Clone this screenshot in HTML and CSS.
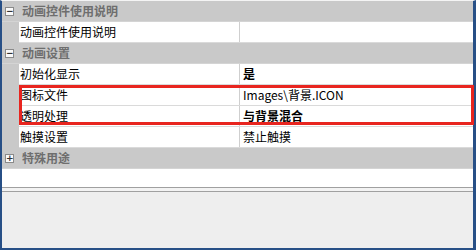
FILE: index.html
```html
<!DOCTYPE html>
<html>
<head>
<meta charset="utf-8">
<link rel="stylesheet" href="styles.css">
</head>
<body>
<div class="frame">
  <div class="grid">
    <div class="row cat">
      <span class="toggle">−</span><span class="cat-label">动画控件使用说明</span>
    </div>
    <div class="row prop">
      <span class="gutter"></span><span class="name">动画控件使用说明</span><span class="value"></span>
    </div>
    <div class="row cat">
      <span class="toggle">−</span><span class="cat-label">动画设置</span>
    </div>
    <div class="row prop">
      <span class="gutter"></span><span class="name">初始化显示</span><span class="value bold">是</span>
    </div>
    <div class="row prop">
      <span class="gutter"></span><span class="name">图标文件</span><span class="value">Images\背景.ICON</span>
    </div>
    <div class="row prop">
      <span class="gutter"></span><span class="name">透明处理</span><span class="value bold">与背景混合</span>
    </div>
    <div class="row prop">
      <span class="gutter"></span><span class="name">触摸设置</span><span class="value">禁止触摸</span>
    </div>
    <div class="row cat">
      <span class="toggle">+</span><span class="cat-label">特殊用途</span>
    </div>
    <div class="empty"></div>
    <div class="highlight"></div>
  </div>
  <div class="splitter"></div>
  <div class="help"></div>
</div>
</body>
</html>
```
FILE: styles.css
```css
html, body {
  margin: 0;
  padding: 0;
  background: #ffffff;
}
.frame {
  width: 476px;
  height: 250px;
  box-sizing: border-box;
  border-left: 2px solid #274f86;
  border-right: 3px solid #274f86;
  border-bottom: 2px solid #274f86;
  border-top: 1px solid #f4f4f4;
  display: flex;
  flex-direction: column;
  font-family: "Noto Sans CJK SC", "Microsoft YaHei", sans-serif;
  font-size: 12px;
  color: #000;
  background: #eeeeee;
}
.grid {
  position: relative;
  display: flex;
  flex-direction: column;
  background: #ffffff;
  height: 186px;
}
.row {
  height: 20px;
  border-bottom: 1px solid #dadada;
  display: flex;
  align-items: center;
  line-height: 20px;
}
.row.cat {
  background: #c9c9c9;
  border-bottom-color: #d4d4d4;
}
.toggle {
  width: 7px;
  height: 7px;
  margin-left: 3px;
  margin-right: 8px;
  border: 1px solid #8a8a8a;
  background: #fafafa;
  color: #333;
  font-size: 9px;
  line-height: 7px;
  text-align: center;
  font-family: "DejaVu Sans", sans-serif;
  font-weight: bold;
}
.cat-label {
  font-weight: bold;
  color: #6e6e6e;
}
.gutter {
  width: 17px;
  align-self: stretch;
  background: #c9c9c9;
  margin-bottom: -1px;
}
.name {
  width: 219px;
  padding-left: 1px;
  align-self: stretch;
  border-right: 1px solid #cfcfcf;
}
.value {
  flex: 1;
  padding-left: 3px;
}
.bold {
  font-weight: bold;
}
.empty {
  flex: 1;
}
.highlight {
  position: absolute;
  left: 17px;
  top: 84px;
  width: 455px;
  height: 40px;
  box-sizing: border-box;
  border: 3px solid #e8251f;
}
.splitter {
  height: 3px;
  border-top: 1px solid #a0a0a0;
  border-bottom: 1px solid #a0a0a0;
  background: #f3f3f3;
}
.help {
  flex: 1;
  background: #eeeeee;
}
```
